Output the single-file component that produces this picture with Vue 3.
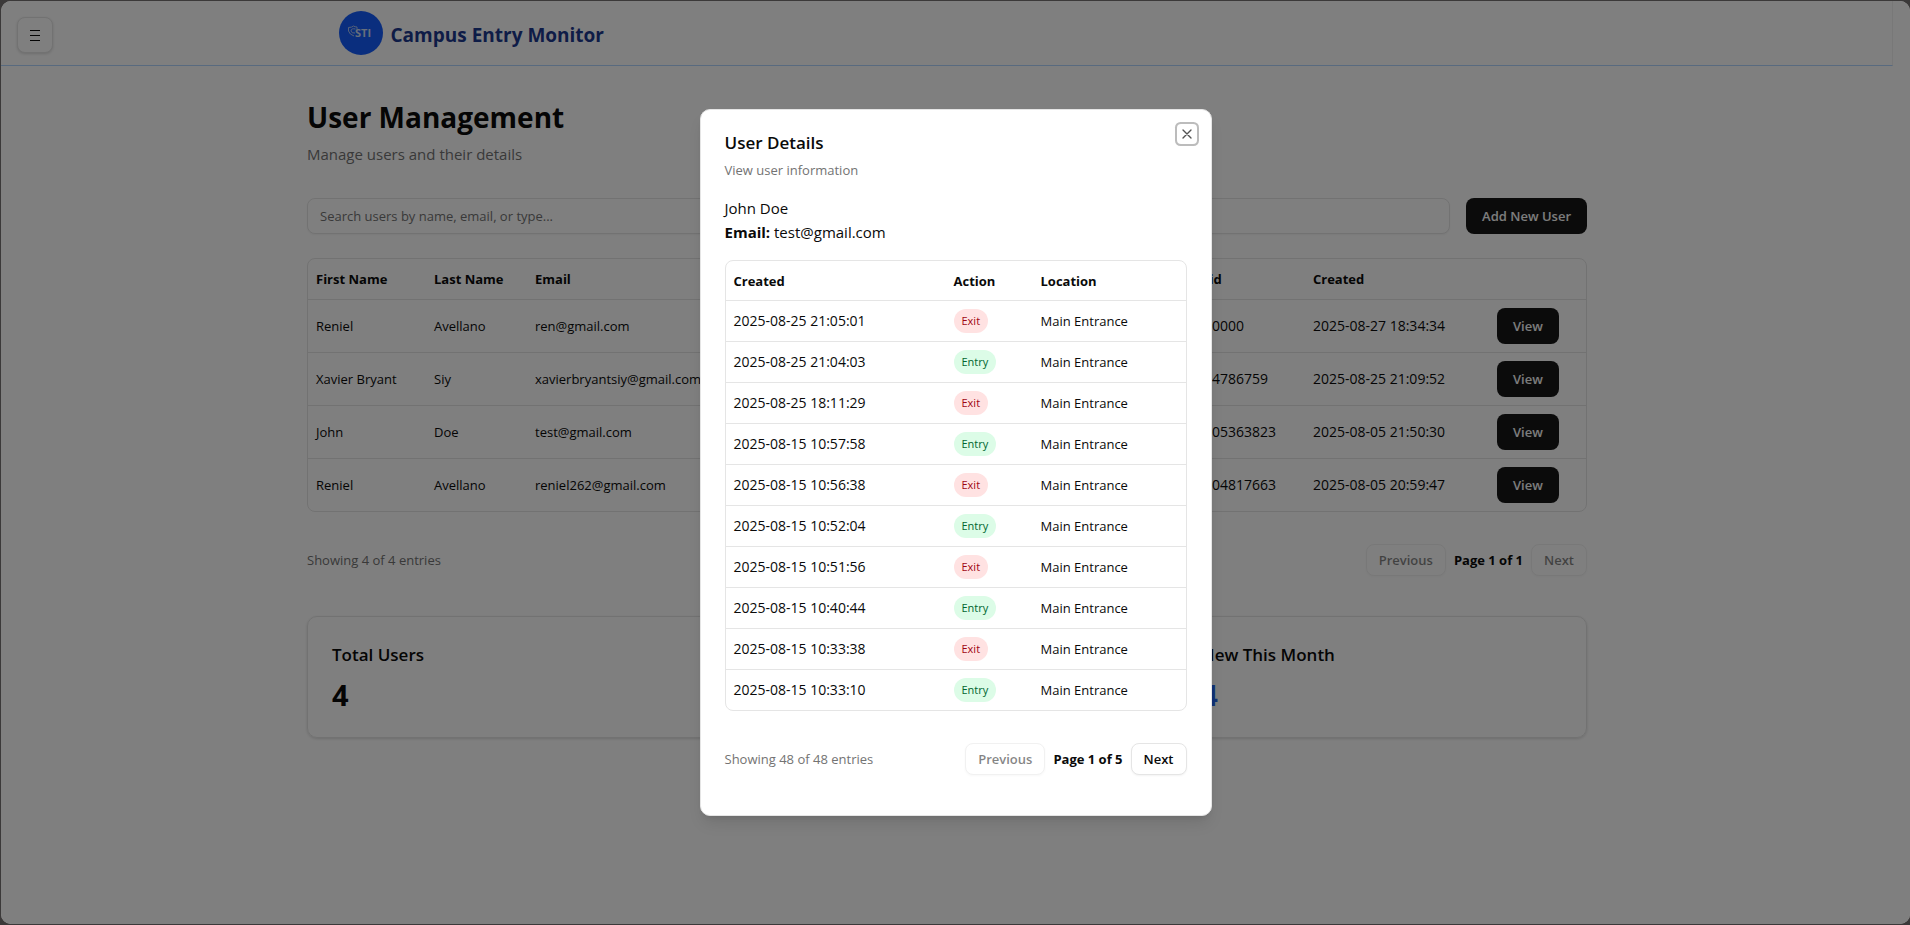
<script setup>
import { ref } from 'vue'

const search = ref('')

const users = [
  { first: 'Reniel', last: 'Avellano', email: 'ren@gmail.com', rfid: '000000', created: '2025-08-27 18:34:34' },
  { first: 'Xavier Bryant', last: 'Siy', email: 'xavierbryantsiy@gmail.com', rfid: '004786759', created: '2025-08-25 21:09:52' },
  { first: 'John', last: 'Doe', email: 'test@gmail.com', rfid: '0005363823', created: '2025-08-05 21:50:30' },
  { first: 'Reniel', last: 'Avellano', email: 'reniel262@gmail.com', rfid: '0004817663', created: '2025-08-05 20:59:47' },
]

const logs = [
  ['2025-08-25 21:05:01', 'Exit'],
  ['2025-08-25 21:04:03', 'Entry'],
  ['2025-08-25 18:11:29', 'Exit'],
  ['2025-08-15 10:57:58', 'Entry'],
  ['2025-08-15 10:56:38', 'Exit'],
  ['2025-08-15 10:52:04', 'Entry'],
  ['2025-08-15 10:51:56', 'Exit'],
  ['2025-08-15 10:40:44', 'Entry'],
  ['2025-08-15 10:33:38', 'Exit'],
  ['2025-08-15 10:33:10', 'Entry'],
]
</script>

<template>
  <div class="frame">
    <div class="page">
      <header class="topbar">
        <button class="menu" type="button" aria-label="Toggle menu">
          <svg width="16" height="16" viewBox="0 0 16 16" aria-hidden="true">
            <path d="M3 3.5h10M3 8.5h10M3 13.5h10" stroke="#0a0a0a" stroke-width="1" fill="none" />
          </svg>
        </button>
        <div class="brand">
          <svg class="logo" width="44" height="44" viewBox="0 0 44 44" aria-hidden="true">
            <circle cx="22" cy="22" r="22" fill="#155dfc" />
            <path d="M9.500 16.500 Q13 16.500 14.500 15 Q16 16 18 16 V18.500 M9.500 16.500 V20 Q10.500 23.500 15 25" fill="none" stroke="#a9c2f2" stroke-width="1" />
            <path d="M16.500 18 Q12 17 12 20 Q12.500 22.500 16 22" fill="none" stroke="#a9c2f2" stroke-width="1" />
            <text x="16" y="26" font-size="11" font-weight="700" fill="#cfdcf7">STI</text>
          </svg>
          <span class="brand-name">Campus Entry Monitor</span>
        </div>
      </header>

      <main class="content">
        <h1>User Management</h1>
        <p class="lead">Manage users and their details</p>

        <div class="toolbar">
          <input v-model="search" type="text" aria-label="Search users" placeholder="Search users by name, email, or type..." />
          <button class="primary add" type="button">Add New User</button>
        </div>

        <div class="table-box">
          <table class="users">
            <colgroup>
              <col class="u-first" /><col class="u-last" /><col class="u-email" />
              <col class="u-rfid" /><col class="u-created" /><col class="u-action" />
            </colgroup>
            <thead>
              <tr>
                <th>First Name</th><th>Last Name</th><th>Email</th><th>Rfid</th><th>Created</th><th></th>
              </tr>
            </thead>
            <tbody>
              <tr v-for="u in users" :key="u.email">
                <td>{{ u.first }}</td>
                <td>{{ u.last }}</td>
                <td>{{ u.email }}</td>
                <td class="num">{{ u.rfid }}</td>
                <td class="num">{{ u.created }}</td>
                <td><button class="primary" type="button">View</button></td>
              </tr>
            </tbody>
          </table>
        </div>

        <div class="pager">
          <p>Showing 4 of 4 entries</p>
          <nav aria-label="Users pages">
            <button class="outline" type="button" disabled>Previous</button>
            <span>Page 1 of 1</span>
            <button class="outline" type="button" disabled>Next</button>
          </nav>
        </div>

        <section class="cards">
          <article class="card">
            <h2>Total Users</h2>
            <p>4</p>
          </article>
          <article class="card last">
            <h2>New This Month</h2>
            <p class="blue">4</p>
          </article>
        </section>
      </main>
    </div>

    <div class="overlay">
      <div class="dialog" role="dialog" aria-modal="true" aria-labelledby="dialog-title">
        <button class="close" type="button" aria-label="Close">
          <svg width="16" height="16" viewBox="0 0 24 24" fill="none" stroke="#0a0a0a" stroke-width="2" stroke-linecap="round" aria-hidden="true">
            <path d="M18 6 6 18M6 6l12 12" />
          </svg>
        </button>
        <h2 id="dialog-title">User Details</h2>
        <p class="sub">View user information</p>
        <div class="person">
          <p>John Doe</p>
          <p><strong>Email:</strong> test@gmail.com</p>
        </div>
        <div class="table-box">
          <table class="logs">
            <colgroup>
              <col class="l-created" /><col class="l-action" /><col />
            </colgroup>
            <thead>
              <tr><th>Created</th><th>Action</th><th>Location</th></tr>
            </thead>
            <tbody>
              <tr v-for="[time, action] in logs" :key="time">
                <td class="num">{{ time }}</td>
                <td><span class="badge" :class="action.toLowerCase()">{{ action }}</span></td>
                <td>Main Entrance</td>
              </tr>
            </tbody>
          </table>
        </div>
        <div class="pager">
          <p>Showing 48 of 48 entries</p>
          <nav aria-label="Log pages">
            <button class="outline" type="button" disabled>Previous</button>
            <span>Page 1 of 5</span>
            <button class="outline" type="button">Next</button>
          </nav>
        </div>
      </div>
    </div>
  </div>
</template>

<style>
html {
  height: 100%;
}
body {
  margin: 0;
  height: 100%;
  background: #3b3939;
}
#app {
  height: 100%;
}
</style>

<style scoped>
* {
  box-sizing: border-box;
}
h1, h2, p {
  margin: 0;
}
button, input {
  font: inherit;
  color: inherit;
}
.frame {
  position: relative;
  height: calc(100vh - 2px);
  margin-left: 1px;
  top: 1px;
  overflow: hidden;
  border-radius: 10px;
  background: #fff;
  color: #0a0a0a;
  font-family: "Open Sans", "Noto Sans", sans-serif;
  font-size: 13px;
  line-height: 20px;
}
.page {
  margin-right: 17px;
}
.topbar {
  border-bottom: 1px solid #b0d4ff;
  border-right: 1px solid #f0f0f0;
}
.menu {
  position: absolute;
  top: 16px;
  left: 16px;
  display: grid;
  place-items: center;
  width: 36px;
  height: 36px;
  padding: 0;
  border: 1px solid #e5e5e5;
  border-radius: 8px;
  background: #fff;
  box-shadow: 0 1px 3px rgba(0, 0, 0, 0.15);
}
.brand {
  display: flex;
  align-items: center;
  gap: 8px;
  height: 64px;
  max-width: 1280px;
  margin: 0 auto;
  padding: 0 32px;
}
.brand-name {
  padding-top: 4px;
  font-size: 19px;
  line-height: 28px;
  font-weight: 700;
  color: #1c398e;
}
.content {
  max-width: 1280px;
  margin: 0 auto;
  padding: 32px 0;
}
h1 {
  font-size: 28px;
  line-height: 38px;
  font-weight: 700;
}
.lead {
  margin-top: 6px;
  font-size: 15px;
  line-height: 24px;
  color: #737373;
}
.toolbar {
  display: flex;
  gap: 16px;
  margin: 32px 0 24px;
}
input {
  flex: 1;
  min-width: 0;
  height: 36px;
  padding: 0 12px;
  border: 1px solid #e5e5e5;
  border-radius: 8px;
  background: #fff;
  box-shadow: 0 1px 2px rgba(0, 0, 0, 0.05);
}
input::placeholder {
  color: #737373;
  opacity: 1;
}
.primary {
  height: 36px;
  padding: 0 16px;
  border: 0;
  border-radius: 8px;
  background: #171717;
  color: #fafafa;
  font-weight: 600;
}
.table-box {
  overflow: hidden;
  border: 1px solid #e5e5e5;
  border-radius: 8px;
}
table {
  width: 100%;
  table-layout: fixed;
  border-spacing: 0;
}
th, td {
  padding: 0 8px;
  text-align: left;
  white-space: nowrap;
  border-bottom: 1px solid #e5e5e5;
}
th {
  height: 41px;
  font-weight: 700;
}
.num {
  font-size: 14px;
}
.users td {
  height: 53px;
}
.logs th {
  height: 40px;
}
.logs td {
  height: 41px;
}
tbody tr:last-child td {
  border-bottom: 0;
}
.users tbody tr:last-child td {
  height: 52px;
}
.logs tbody tr:last-child td {
  height: 40px;
}
.u-first { width: 118px; }
.u-last { width: 101px; }
.u-rfid { width: 117px; }
.u-created { width: 184px; }
.u-action { width: 97px; }
.l-created { width: 220px; }
.l-action { width: 87px; }
.pager {
  display: flex;
  align-items: center;
  justify-content: space-between;
  margin: 32px 0 40px;
}
.pager p {
  color: #737373;
}
.pager nav {
  display: flex;
  align-items: center;
  gap: 8px;
}
.pager nav span {
  font-weight: 700;
}
.outline {
  height: 32px;
  padding: 0 12px;
  border: 1px solid #e5e5e5;
  border-radius: 8px;
  background: #fff;
  font-weight: 600;
  box-shadow: 0 1px 2px rgba(0, 0, 0, 0.05);
}
.outline:disabled {
  opacity: 0.5;
}
.cards {
  display: grid;
  grid-template-columns: repeat(3, 1fr);
  gap: 24px;
}
.card {
  padding: 24px;
  border: 1px solid #e5e5e5;
  border-radius: 10px;
  box-shadow: 0 1px 3px rgba(0, 0, 0, 0.15);
}
.cards .last {
  grid-column: 3;
}
.card h2 {
  font-size: 17px;
  line-height: 28px;
  font-weight: 600;
}
.card p {
  margin-top: 8px;
  font-size: 29px;
  line-height: 36px;
  font-weight: 700;
}
.card .blue {
  color: #2563eb;
}
.overlay {
  position: absolute;
  inset: 0;
  display: flex;
  align-items: center;
  justify-content: center;
  background: rgba(0, 0, 0, 0.5);
}
.dialog {
  position: relative;
  width: 512px;
  padding: 24px;
  border: 1px solid #e5e5e5;
  border-radius: 10px;
  background: #fff;
  box-shadow: 0 10px 15px -3px rgba(0, 0, 0, 0.1), 0 4px 6px -4px rgba(0, 0, 0, 0.1);
}
.dialog h2 {
  font-size: 17px;
  line-height: 18px;
  font-weight: 600;
}
.sub {
  margin-top: 8px;
  color: #737373;
}
.person {
  margin: 16px 0;
  font-size: 15px;
  line-height: 24px;
}
.person strong {
  font-weight: 700;
}
.dialog .pager {
  margin-bottom: 16px;
}
.close {
  position: absolute;
  top: 16px;
  right: 16px;
  width: 16px;
  height: 16px;
  padding: 0;
  border: 0;
  border-radius: 2px;
  background: #fff;
  opacity: 0.7;
  box-shadow: 0 0 0 2px #fff, 0 0 0 4px #a1a1a1;
}
.close svg {
  display: block;
}
.badge {
  display: inline-block;
  padding: 4px 8px;
  border-radius: 12px;
  font-size: 11px;
  line-height: 16px;
  vertical-align: middle;
}
.badge.exit {
  background: #ffe2e2;
  color: #9f0712;
}
.badge.entry {
  background: #dcfce7;
  color: #016630;
}
</style>
